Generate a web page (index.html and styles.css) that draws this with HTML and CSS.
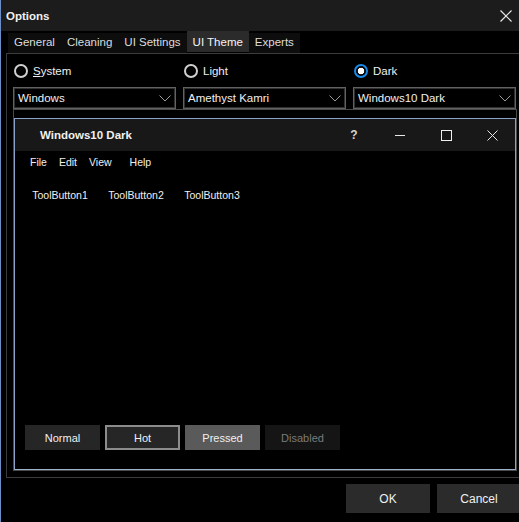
FILE: index.html
```html
<!DOCTYPE html>
<html>
<head>
<meta charset="utf-8">
<link rel="stylesheet" href="styles.css">
</head>
<body>
<div class="window">
  <div class="titlebar">
    <span class="title">Options</span>
    <svg class="close" width="12" height="12" viewBox="0 0 12 12"><path d="M0.5 0.5 L11.5 11.5 M11.5 0.5 L0.5 11.5" stroke="#e8e8e8" stroke-width="1.2" fill="none"/></svg>
  </div>
  <div class="tabs">
    <span class="tab">General</span>
    <span class="tab">Cleaning</span>
    <span class="tab">UI Settings</span>
    <span class="tab active">UI Theme</span>
    <span class="tab">Experts</span>
  </div>
  <div class="panel">
    <div class="choices">
      <label class="radio"><span class="dot"></span><span><u>S</u>ystem</span></label>
      <label class="radio"><span class="dot"></span><span>Light</span></label>
      <label class="radio"><span class="dot checked"></span><span>Dark</span></label>
      <div class="combo"><span>Windows</span><svg width="12" height="7" viewBox="0 0 12 7"><path d="M0.5 0.5 L6 6 L11.5 0.5" stroke="#9a9a9a" fill="none"/></svg></div>
      <div class="combo"><span>Amethyst Kamri</span><svg width="12" height="7" viewBox="0 0 12 7"><path d="M0.5 0.5 L6 6 L11.5 0.5" stroke="#9a9a9a" fill="none"/></svg></div>
      <div class="combo"><span>Windows10 Dark</span><svg width="12" height="7" viewBox="0 0 12 7"><path d="M0.5 0.5 L6 6 L11.5 0.5" stroke="#9a9a9a" fill="none"/></svg></div>
    </div>
    <div class="preview">
      <div class="pwin">
        <div class="ptitle">
          <span class="ptext">Windows10 Dark</span>
          <div class="caps">
            <span class="cap help">?</span>
            <span class="cap"><svg width="10" height="10" viewBox="0 0 10 10"><path d="M0 5.5 H10" stroke="#e8e8e8" fill="none"/></svg></span>
            <span class="cap"><svg width="11" height="11" viewBox="0 0 11 11"><rect x="0.5" y="0.5" width="10" height="10" stroke="#f0f0f0" fill="none"/></svg></span>
            <span class="cap"><svg width="11" height="11" viewBox="0 0 11 11"><path d="M0.5 0.5 L10.5 10.5 M10.5 0.5 L0.5 10.5" stroke="#e8e8e8" fill="none"/></svg></span>
          </div>
        </div>
        <div class="menu">
          <span class="mi">File</span>
          <span class="mi">Edit</span>
          <span class="mi">View</span>
          <span class="mi wide">Help</span>
        </div>
        <div class="toolbar">
          <span class="tb">ToolButton1</span>
          <span class="tb">ToolButton2</span>
          <span class="tb">ToolButton3</span>
        </div>
        <div class="states">
          <span class="sb">Normal</span>
          <span class="sb hot">Hot</span>
          <span class="sb pressed">Pressed</span>
          <span class="sb disabled">Disabled</span>
        </div>
      </div>
    </div>
  </div>
  <div class="footer">
    <span class="btn">OK</span>
    <span class="btn">Cancel</span>
  </div>
</div>
</body>
</html>
```
FILE: styles.css
```css
html, body {
  margin: 0;
  padding: 0;
  background: #000;
}
body {
  width: 519px;
  height: 522px;
  overflow: hidden;
  font-family: "Liberation Sans", Arial, sans-serif;
  font-size: 11.5px;
  color: #f0f0f0;
}
.window {
  height: 522px;
  width: 519px;
  border-left: 1px solid #6d8ec6;
  box-sizing: border-box;
  overflow: hidden;
}
.titlebar {
  height: 31px;
  background: #1c1c1c;
  display: flex;
  align-items: center;
  padding-left: 5px;
  padding-right: 7px;
  justify-content: space-between;
}
.title {
  font-weight: bold;
  margin-top: 1px;
}
.tabs {
  height: 22px;
  display: flex;
  padding-left: 7px;
  align-items: flex-end;
}
.tab {
  height: 20px;
  line-height: 19px;
  padding: 0 6px;
  color: #dcdcdc;
  background: #0d0d0d;
}
.tab.active {
  height: 21px;
  line-height: 22px;
  background: #2b2b2b;
  color: #f4f4f4;
  margin-bottom: 1px;
}
.panel {
  margin-left: 5px;
  border: 1px solid #3c3c3c;
  border-right: none;
  height: 425px;
  padding: 10px 0 0 6px;
  box-sizing: border-box;
}
.choices {
  display: grid;
  grid-template-columns: 163px 163px 163px;
  column-gap: 7px;
  row-gap: 9px;
}
.radio {
  display: flex;
  align-items: center;
  gap: 5px;
  height: 14px;
  padding-left: 1px;
}
.dot {
  width: 14px;
  height: 14px;
  box-sizing: border-box;
  border: 2px solid #cfcfcf;
  border-radius: 50%;
  background: #000;
}
.dot.checked {
  border: 2px solid #1a8ae8;
  background: radial-gradient(circle, #fff 0, #fff 3px, #000 3.6px);
}
.combo {
  height: 22px;
  box-sizing: border-box;
  border: 1px solid #626262;
  box-shadow: inset 0 0 0 1px #303030;
  display: flex;
  align-items: center;
  justify-content: space-between;
  padding: 0 4px;
}
.preview {
  width: 504px;
  height: 362px;
  box-sizing: border-box;
  border: 1px solid #4a4a4a;
  padding-top: 8px;
}
.pwin {
  height: 352px;
  box-sizing: border-box;
  border: 1px solid #8aa2c8;
  border-bottom-color: #9fb0cc;
  display: flex;
  flex-direction: column;
}
.ptitle {
  height: 32px;
  background: #181818;
  display: flex;
  align-items: center;
  flex-shrink: 0;
}
.ptext {
  font-weight: bold;
  padding-left: 25px;
  flex: 1;
}
.caps {
  display: flex;
  height: 32px;
}
.cap {
  width: 46px;
  display: flex;
  align-items: center;
  justify-content: center;
}
.cap.help {
  font-weight: bold;
  font-size: 12px;
  color: #d4d4d4;
}
.menu {
  display: flex;
  padding: 1px 0 0 9px;
  height: 19px;
  align-items: center;
}
.mi {
  padding: 0 6px;
  font-size: 10.5px;
}
.mi.wide {
  margin-left: 6px;
}
.toolbar {
  display: flex;
  padding: 14px 0 0 7px;
}
.tb {
  width: 76px;
  text-align: center;
  font-size: 10.5px;
  line-height: 20px;
}
.states {
  margin-top: auto;
  margin-bottom: 19px;
  display: flex;
  gap: 5px;
  padding-left: 10px;
}
.sb {
  width: 75px;
  height: 25px;
  box-sizing: border-box;
  background: #262626;
  display: flex;
  align-items: center;
  justify-content: center;
  font-size: 11px;
}
.sb.hot {
  border: 2px solid #8c8c8c;
}
.sb.pressed {
  background: #5a5a5a;
}
.sb.disabled {
  background: #151515;
  color: #7a7a7a;
}
.footer {
  display: flex;
  gap: 7px;
  padding: 6px 0 0 345px;
  overflow: hidden;
}
.btn {
  width: 84px;
  height: 29px;
  flex-shrink: 0;
  background: #2b2b2b;
  display: flex;
  align-items: center;
  justify-content: center;
  font-size: 12px;
}
```
